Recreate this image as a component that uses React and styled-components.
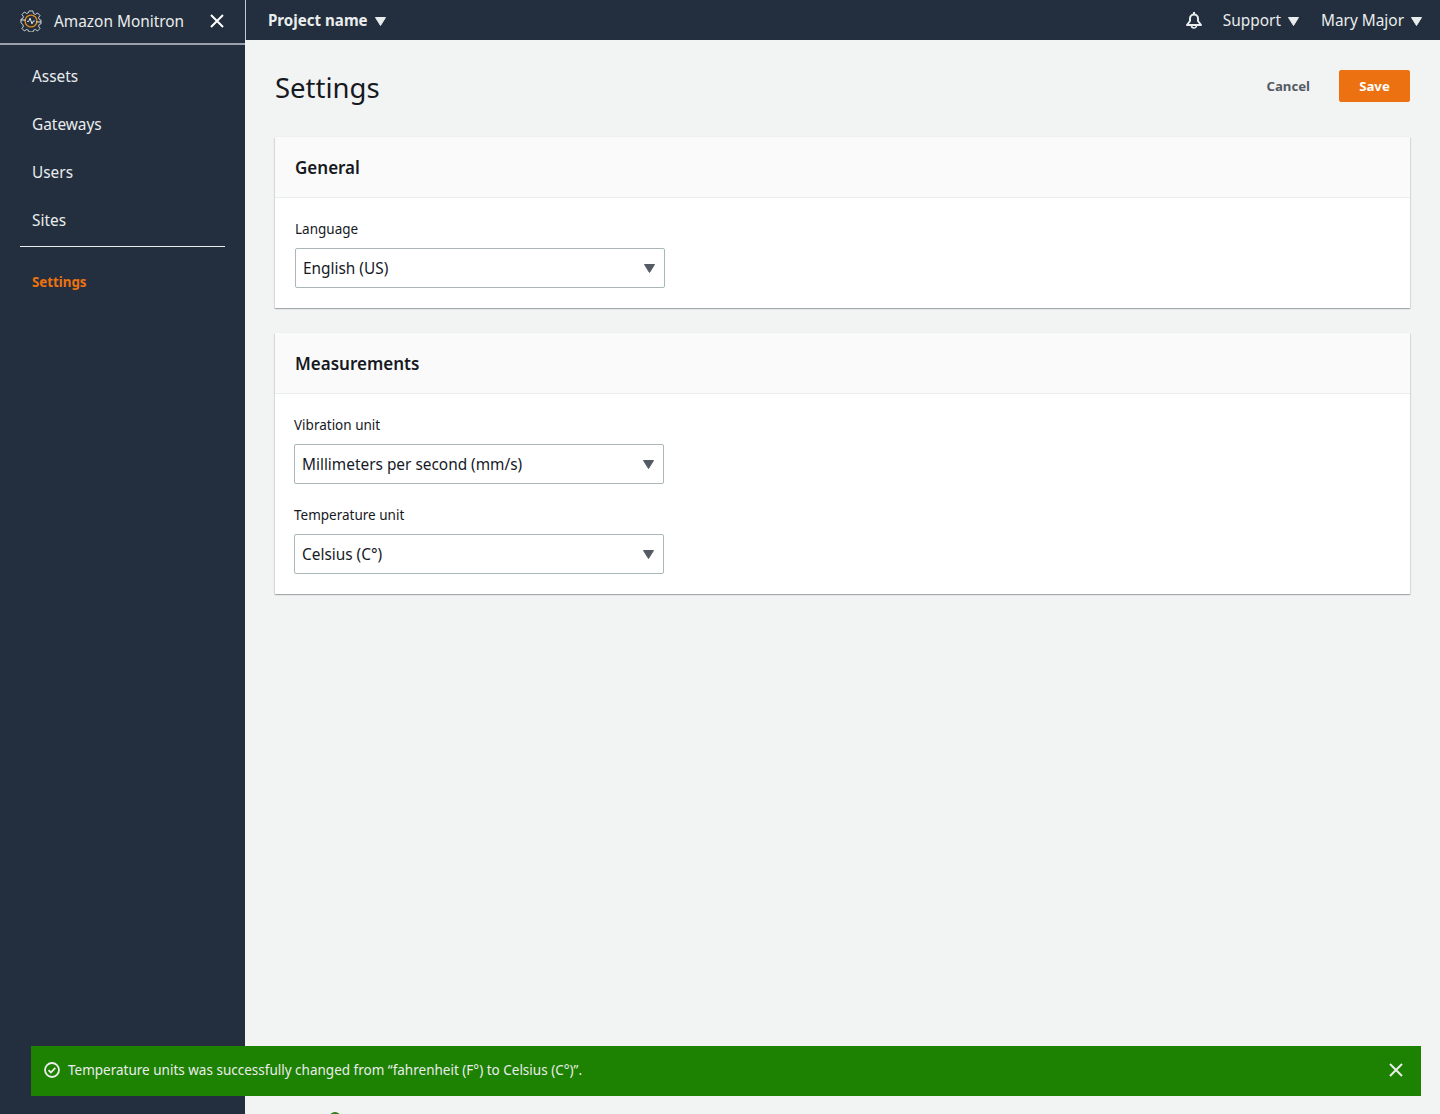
import React from "react";
import styled, { createGlobalStyle } from "styled-components";

const GlobalStyle = createGlobalStyle`
    html, body {
        margin: 0;
        padding: 0;
        background: #f2f3f3;
        font-family: "Noto Sans", "Open Sans", sans-serif;
        color: #16191f;
    }
    * {
        box-sizing: border-box;
    }
`;

const Page = styled.div`
    display: flex;
    width: 1440px;
    height: 1114px;
    overflow: hidden;
    position: relative;
`;

const Sidebar = styled.aside`
    width: 245px;
    flex: none;
    background: #232f3e;
    display: flex;
    flex-direction: column;
`;

const SideHeader = styled.div`
    height: 45px;
    display: flex;
    align-items: center;
    padding: 0 21px 2px 20px;
    border-bottom: 2px solid #9aa1a8;
    color: #eaeded;
    font-size: 15.4px;
`;

const AppName = styled.span`
    margin: 2px 0 0 12px;
    flex: 1;
    white-space: nowrap;
`;

const SideNav = styled.nav`
    display: flex;
    flex-direction: column;
    padding-top: 7px;
`;

const NavItem = styled.a`
    height: 48px;
    display: flex;
    align-items: center;
    padding-left: 32px;
    font-size: 15.4px;
    color: #eaeded;
`;

const NavDivider = styled.div`
    height: 1px;
    margin: 2px 20px 0;
    background: #eaeded;
`;

const SettingsLink = styled.a`
    margin: 25px 0 0 32px;
    font-size: 13.3px;
    line-height: 20px;
    font-weight: 700;
    color: #ec7211;
`;

const Main = styled.div`
    flex: 1;
    min-width: 0;
    display: flex;
    flex-direction: column;
`;

const TopBar = styled.header`
    height: 40px;
    background: #232f3e;
    border-left: 1px solid #c4c8cc;
    display: flex;
    align-items: center;
    padding: 0 18px 0 22px;
    color: #eaeded;
    font-size: 15.4px;
`;

const ProjectName = styled.span`
    font-weight: 700;
    font-size: 15.1px;
    display: flex;
    align-items: center;
    gap: 7px;
`;

const TopRight = styled.div`
    margin-left: auto;
    display: flex;
    align-items: center;
`;

const TopMenu = styled.span`
    display: flex;
    align-items: center;
    gap: 7px;
    margin-left: ${(props) => props.$gap}px;
`;

const Content = styled.main`
    padding: 30px 30px 0 30px;
    display: flex;
    flex-direction: column;
`;

const TitleRow = styled.div`
    display: flex;
    align-items: flex-start;
    justify-content: space-between;
    margin-bottom: 31px;
`;

const Title = styled.h1`
    margin: 0;
    font-size: 27.5px;
    line-height: 36px;
    font-weight: 400;
    color: #16191f;
`;

const Actions = styled.div`
    display: flex;
    align-items: center;
    gap: 29px;
`;

const CancelButton = styled.button`
    border: 0;
    background: none;
    padding: 0;
    font: 700 13.2px/32px "Noto Sans", sans-serif;
    color: #545b64;
`;

const SaveButton = styled.button`
    width: 71px;
    height: 32px;
    border: 1px solid #ec7211;
    border-radius: 2px;
    background: #ec7211;
    font: 700 13.2px/20px "Noto Sans", sans-serif;
    color: #fff;
`;

const Card = styled.section`
    background: #fff;
    box-shadow: 0 1px 1px 0 rgba(0, 28, 36, 0.2), 1px 1px 1px 0 rgba(0, 28, 36, 0.08),
        -1px 1px 1px 0 rgba(0, 28, 36, 0.08), 0 0 1px 0 rgba(0, 28, 36, 0.08);
    margin-bottom: 25px;
`;

const CardHeader = styled.div`
    height: 61px;
    background: #fafafa;
    border-bottom: 1px solid #eaeded;
    display: flex;
    align-items: center;
    padding: 2px 0 0 20px;
`;

const CardTitle = styled.h2`
    margin: 0;
    font-size: 17px;
    line-height: 24px;
    font-weight: 600;
    color: #16191f;
`;

const CardBody = styled.div`
    padding: 21px 0 20px ${(props) => props.$left}px;
    display: flex;
    flex-direction: column;
    gap: 21px;
`;

const Field = styled.div`
    display: flex;
    flex-direction: column;
    width: 370px;
`;

const Label = styled.label`
    font-size: 13.5px;
    line-height: 20px;
    margin-bottom: 9px;
    color: #16191f;
`;

const Select = styled.div`
    height: 40px;
    border: 1px solid #aab7b8;
    border-radius: 2px;
    background: #fff;
    display: flex;
    align-items: center;
    justify-content: space-between;
    padding: 0 9px 0 7px;
    font-size: 15.4px;
    color: #16191f;
`;

const Flash = styled.div`
    position: absolute;
    left: 31px;
    top: 1046px;
    width: 1390px;
    height: 50px;
    background: #1d8102;
    color: #eaeded;
    display: flex;
    align-items: center;
    padding: 0 18px 2px 13px;
    font-size: 13.5px;
`;

const FlashText = styled.span`
    margin-left: 8px;
    flex: 1;
`;

const PeekDot = styled.div`
    position: absolute;
    left: 329px;
    top: 1112px;
    width: 12px;
    height: 12px;
    border: 2px solid #2f7d1c;
    border-radius: 50%;
`;

const CaretMark = styled.svg`
    margin-top: ${(props) => props.$drop}px;
    flex: none;
`;

const BellMark = styled.svg`
    margin-right: 1px;
`;

const Caret = ({ color = "#eaeded", drop = 2 }) => (
    <CaretMark $drop={drop} width="11" height="9" viewBox="0 0 11 9">
        <path d="M0.5 0.5h10L5.5 8.5z" fill={color} stroke={color} strokeLinejoin="round" />
    </CaretMark>
);

const Logo = () => (
    <svg width="22" height="22" viewBox="0 0 23 23" fill="none">
        <path
            d="M9.5 1h4l.6 2.8 1.9.8 2.4-1.5 2.5 2.6-1.5 2.4.8 1.9 1.8.6v3.8l-1.8.6-.8 1.9 1.5 2.4-2.5 2.6-2.4-1.5-1.9.8-.6 1.8h-4l-.6-1.8-1.9-.8-2.4 1.5-2.5-2.6 1.5-2.4-.8-1.9L1 13.4V9.6l1.8-.6.8-1.9-1.5-2.4 2.5-2.6 2.4 1.5 1.9-.8z"
            stroke="#d5dbdb"
            strokeWidth="1"
        />
        <circle cx="11.5" cy="11.5" r="6.2" stroke="#e08a1e" strokeWidth="1.4" />
        <path d="M1 10.5h5M17 12.5h5M7.5 12h1.5l1.5-3.5 2 6 1.5-3h1.5" stroke="#eaeded" strokeWidth="1" />
    </svg>
);

const CloseIcon = ({ size = 14, width = 2, color = "#fff" }) => (
    <svg width={size} height={size} viewBox="0 0 14 14" fill="none">
        <path d="M1 1l12 12M13 1L1 13" stroke={color} strokeWidth={width} />
    </svg>
);

const Bell = () => (
    <BellMark width="16" height="17" viewBox="0 0 16 17" fill="none" stroke="#eaeded" strokeWidth="2">
        <path d="M8 0v2M1 13h14l-3-4V6.5a4 4 0 0 0-8 0V9z" strokeLinejoin="round" />
        <path d="M5.5 13.5a2.5 2.5 0 0 0 5 0" strokeWidth="1.6" />
    </BellMark>
);

const CheckCircle = () => (
    <svg width="16" height="16" viewBox="0 0 16 16" fill="none" stroke="#eaeded" strokeWidth="1.8">
        <circle cx="8" cy="8" r="7" />
        <path d="M4.5 8.2l2.4 2.3 4.4-4.6" />
    </svg>
);

const navItems = ["Assets", "Gateways", "Users", "Sites"];

const SelectField = ({ label, value }) => (
    <Field>
        <Label>{label}</Label>
        <Select>
            {value}
            <Caret color="#545b64" drop={0} />
        </Select>
    </Field>
);

const App = () => {
    return (
        <Page>
            <GlobalStyle />
            <Sidebar>
                <SideHeader>
                    <Logo />
                    <AppName>Amazon Monitron</AppName>
                    <CloseIcon />
                </SideHeader>
                <SideNav>
                    {navItems.map((item) => (
                        <NavItem key={item}>{item}</NavItem>
                    ))}
                    <NavDivider />
                    <SettingsLink>Settings</SettingsLink>
                </SideNav>
            </Sidebar>
            <Main>
                <TopBar>
                    <ProjectName>
                        Project name <Caret />
                    </ProjectName>
                    <TopRight>
                        <Bell />
                        <TopMenu $gap={20}>
                            Support <Caret />
                        </TopMenu>
                        <TopMenu $gap={22}>
                            Mary Major <Caret />
                        </TopMenu>
                    </TopRight>
                </TopBar>
                <Content>
                    <TitleRow>
                        <Title>Settings</Title>
                        <Actions>
                            <CancelButton>Cancel</CancelButton>
                            <SaveButton>Save</SaveButton>
                        </Actions>
                    </TitleRow>
                    <Card>
                        <CardHeader>
                            <CardTitle>General</CardTitle>
                        </CardHeader>
                        <CardBody $left={20}>
                            <SelectField label="Language" value="English (US)" />
                        </CardBody>
                    </Card>
                    <Card>
                        <CardHeader>
                            <CardTitle>Measurements</CardTitle>
                        </CardHeader>
                        <CardBody $left={19}>
                            <SelectField label="Vibration unit" value="Millimeters per second (mm/s)" />
                            <SelectField label="Temperature unit" value="Celsius (C°)" />
                        </CardBody>
                    </Card>
                </Content>
            </Main>
            <Flash>
                <CheckCircle />
                <FlashText>Temperature units was successfully changed from “fahrenheit (F°) to Celsius (C°)”.</FlashText>
                <CloseIcon size={14} width={2} color="#eaeded" />
            </Flash>
            <PeekDot />
        </Page>
    );
};

export default App;
